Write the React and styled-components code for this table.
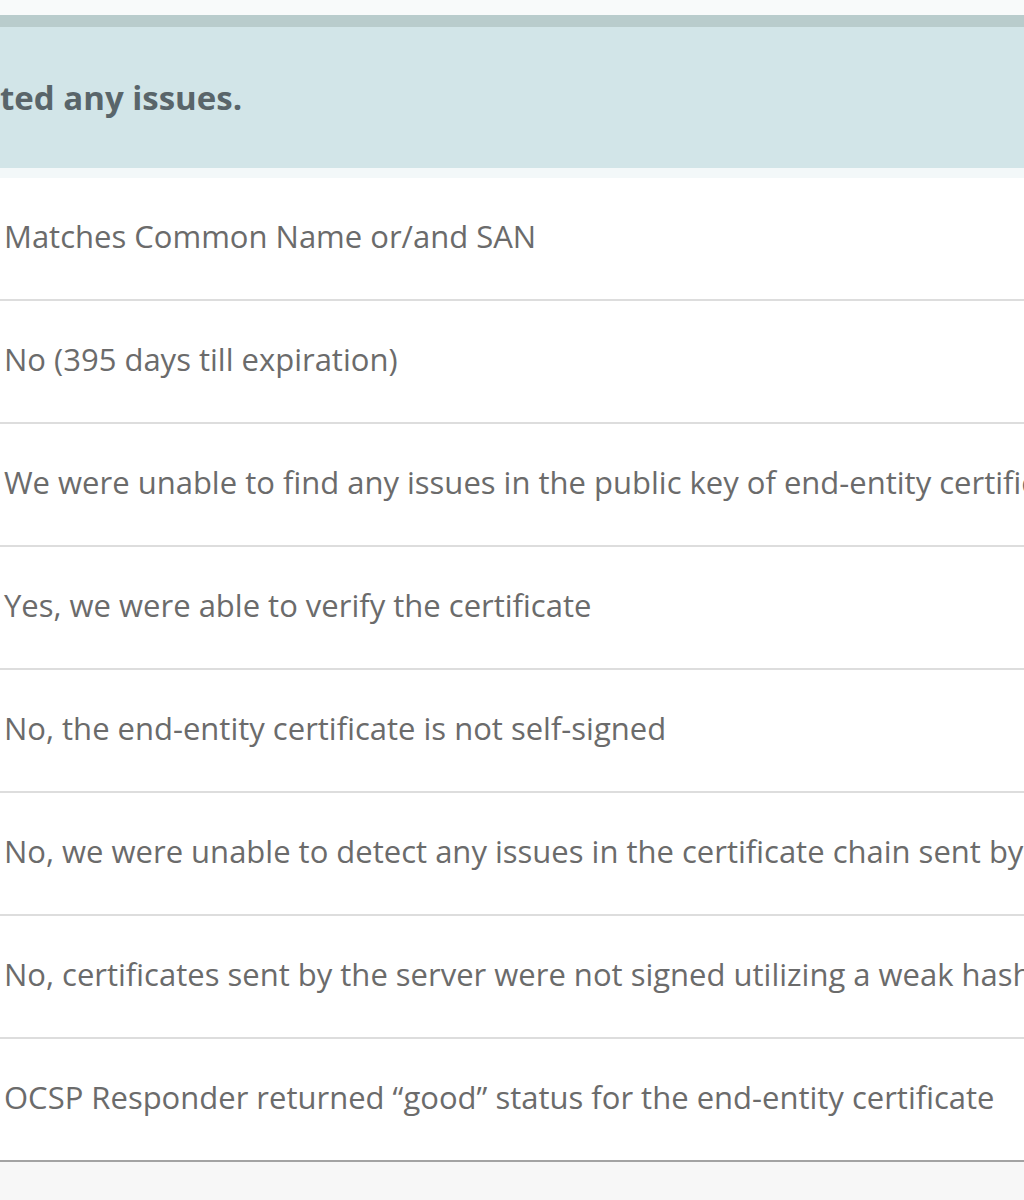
import styled, { createGlobalStyle } from "styled-components";

const GlobalStyle = createGlobalStyle`
  html, body {
    margin: 0;
    padding: 0;
    background: #f7f7f7;
    overflow: hidden;
  }
  body {
    font-family: "Open Sans", "Liberation Sans", sans-serif;
  }
`;

const Page = styled.div`
  width: 1024px;
  height: 1200px;
  display: flex;
  flex-direction: column;
  background: #f7f7f7;
  overflow: hidden;
`;

const TopStrip = styled.div`
  height: 15px;
  background: #f8fafa;
`;

const Banner = styled.div`
  height: 141px;
  border-top: 12px solid #b9cccc;
  background: #d2e5e8;
  display: flex;
  align-items: center;
  padding-left: 0;
  color: #59656a;
  font-size: 33px;
  font-weight: 700;
  white-space: nowrap;
`;

const BannerGap = styled.div`
  height: 10px;
  background: #f3f8f9;
`;

const Table = styled.div`
  display: flex;
  flex-direction: column;
  background: #fff;
`;

const Row = styled.div`
  height: 123px;
  box-sizing: border-box;
  display: flex;
  align-items: center;
  padding: 0 0 5px 4px;
  border-bottom: 2px solid ${(p) => (p.$last ? "#a3a3a3" : "#dddddd")};
  color: #6b6b6b;
  font-size: 31px;
  white-space: nowrap;
  overflow: hidden;
`;

const rows = [
  "Matches Common Name or/and SAN",
  "No (395 days till expiration)",
  "We were unable to find any issues in the public key of end-entity certificate",
  "Yes, we were able to verify the certificate",
  "No, the end-entity certificate is not self-signed",
  "No, we were unable to detect any issues in the certificate chain sent by the server",
  "No, certificates sent by the server were not signed utilizing a weak hash algorithm",
  "OCSP Responder returned \u201cgood\u201d status for the end-entity certificate",
];

export default function App() {
  return (
    <Page>
      <GlobalStyle />
      <TopStrip />
      <Banner>ted any issues.</Banner>
      <BannerGap />
      <Table>
        {rows.map((text, i) => (
          <Row key={i} $last={i === rows.length - 1}>
            {text}
          </Row>
        ))}
      </Table>
    </Page>
  );
}
